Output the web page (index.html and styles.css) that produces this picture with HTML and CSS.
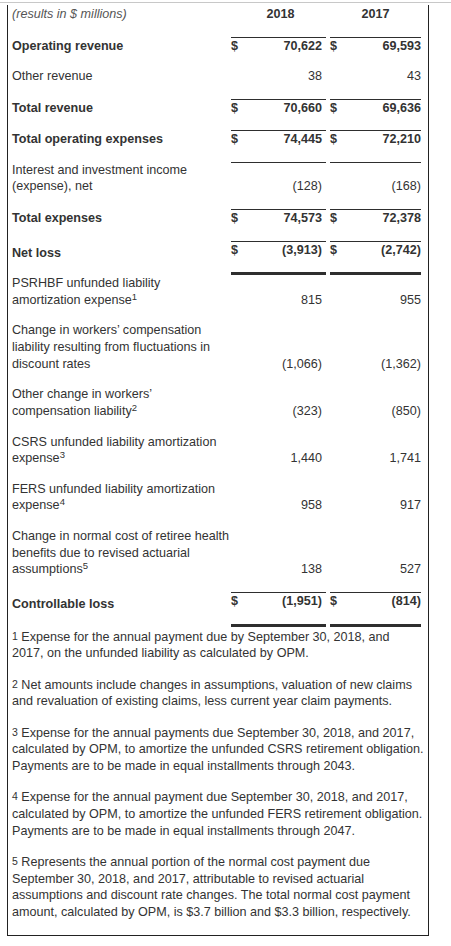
FILE: index.html
```html
<!DOCTYPE html>
<html lang="en">
<head>
  <meta charset="UTF-8">
  <meta name="viewport" content="width=device-width, initial-scale=1.0">
  <title>Controllable loss</title>
  <link rel="stylesheet" href="styles.css">
</head>
<body>
  <div class="topline"></div>

  <div class="panel">
    <table class="stmt">
      <colgroup>
        <col class="c-label">
        <col class="c-cur">
        <col class="c-gap">
        <col class="c-prev">
      </colgroup>

      <!-- cabeçalho -->
      <tr class="head">
        <td class="note">(results in $ millions)</td>
        <td class="year cur">2018</td>
        <td></td>
        <td class="year">2017</td>
      </tr>

      <tr class="bold">
        <td>Operating revenue</td>
        <td class="cur rule"><div class="amt"><span>$</span><span>70,622</span></div></td>
        <td></td>
        <td class="rule"><div class="amt"><span>$</span><span>69,593</span></div></td>
      </tr>
      <tr>
        <td>Other revenue</td>
        <td class="cur"><div class="amt end"><span>38</span></div></td>
        <td></td>
        <td><div class="amt end"><span>43</span></div></td>
      </tr>
      <tr class="bold">
        <td>Total revenue</td>
        <td class="cur rule"><div class="amt"><span>$</span><span>70,660</span></div></td>
        <td></td>
        <td class="rule"><div class="amt"><span>$</span><span>69,636</span></div></td>
      </tr>
      <tr class="bold">
        <td>Total operating expenses</td>
        <td class="cur rule"><div class="amt"><span>$</span><span>74,445</span></div></td>
        <td></td>
        <td class="rule"><div class="amt"><span>$</span><span>72,210</span></div></td>
      </tr>
      <tr>
        <td>Interest and investment income (expense), net</td>
        <td class="cur rule"><div class="amt end"><span>(128)</span></div></td>
        <td></td>
        <td class="rule"><div class="amt end"><span>(168)</span></div></td>
      </tr>
      <tr class="bold">
        <td>Total expenses</td>
        <td class="cur rule"><div class="amt"><span>$</span><span>74,573</span></div></td>
        <td></td>
        <td class="rule"><div class="amt"><span>$</span><span>72,378</span></div></td>
      </tr>
      <tr class="bold">
        <td>Net loss</td>
        <td class="cur rule total"><div class="amt"><span>$</span><span>(3,913)</span></div></td>
        <td></td>
        <td class="rule total"><div class="amt"><span>$</span><span>(2,742)</span></div></td>
      </tr>

      <!-- itens de reconciliação -->
      <tr>
        <td>PSRHBF unfunded liability amortization expense<sup>1</sup></td>
        <td class="cur"><div class="amt end"><span>815</span></div></td>
        <td></td>
        <td><div class="amt end"><span>955</span></div></td>
      </tr>
      <tr>
        <td>Change in workers’ compensation liability resulting from fluctuations in discount rates</td>
        <td class="cur"><div class="amt end"><span>(1,066)</span></div></td>
        <td></td>
        <td><div class="amt end"><span>(1,362)</span></div></td>
      </tr>
      <tr>
        <td>Other change in workers’ compensation liability<sup>2</sup></td>
        <td class="cur"><div class="amt end"><span>(323)</span></div></td>
        <td></td>
        <td><div class="amt end"><span>(850)</span></div></td>
      </tr>
      <tr>
        <td>CSRS unfunded liability amortization expense<sup>3</sup></td>
        <td class="cur"><div class="amt end"><span>1,440</span></div></td>
        <td></td>
        <td><div class="amt end"><span>1,741</span></div></td>
      </tr>
      <tr>
        <td>FERS unfunded liability amortization expense<sup>4</sup></td>
        <td class="cur"><div class="amt end"><span>958</span></div></td>
        <td></td>
        <td><div class="amt end"><span>917</span></div></td>
      </tr>
      <tr>
        <td>Change in normal cost of retiree health benefits due to revised actuarial assumptions<sup>5</sup></td>
        <td class="cur"><div class="amt end"><span>138</span></div></td>
        <td></td>
        <td><div class="amt end"><span>527</span></div></td>
      </tr>
      <tr class="bold">
        <td>Controllable loss</td>
        <td class="cur rule total"><div class="amt"><span>$</span><span>(1,951)</span></div></td>
        <td></td>
        <td class="rule total"><div class="amt"><span>$</span><span>(814)</span></div></td>
      </tr>
    </table>

    <!-- notas de rodapé -->
    <div class="notes">
      <p><sup class="mark">1</sup> Expense for the annual payment due by September 30, 2018, and<br>2017, on the unfunded liability as calculated by OPM.</p>
      <p><sup class="mark">2</sup> Net amounts include changes in assumptions, valuation of new claims and revaluation of existing claims, less current year claim payments.</p>
      <p><sup class="mark">3</sup> Expense for the annual payments due September 30, 2018, and 2017, calculated by OPM, to amortize the unfunded CSRS retirement obligation. Payments are to be made in equal installments through 2043.</p>
      <p><sup class="mark">4</sup> Expense for the annual payment due September 30, 2018, and 2017, calculated by OPM, to amortize the unfunded FERS retirement obligation. Payments are to be made in equal installments through 2047.</p>
      <p><sup class="mark">5</sup> Represents the annual portion of the normal cost payment due September 30, 2018, and 2017, attributable to revised actuarial assumptions and discount rate changes. The total normal cost payment amount, calculated by OPM, is $3.7 billion and $3.3 billion, respectively.</p>
    </div>
  </div>
</body>
</html>
```

FILE: styles.css
```css
/* Variáveis */
:root {
  --text-color: #333333;
  --rule-color: #2e2e2e;
  --pad-bottom: 13.85px;
}

body {
  margin: 0;
  background-color: #ffffff;
  color: var(--text-color);
  font-family: "Liberation Sans", Arial, sans-serif;
  font-size: 12.6px;
  line-height: 16.7px;
}

.topline {
  margin-top: 2px;
  border-top: 1px solid #c8c8c8;
}

.panel {
  width: 416px;
  margin: 2px 0 0 7px;
  padding-left: 4px;
  border: 1px solid #222222;
  border-top: none;
}

.stmt {
  width: 409px;
  table-layout: fixed;
  border-collapse: separate;
  border-spacing: 0;
}

.c-label { width: 219px; }
.c-cur { width: 95px; }
.c-gap { width: 4px; }
.c-prev { width: 91px; }

.stmt td {
  padding: 0 0 var(--pad-bottom);
  vertical-align: bottom;
}

.stmt td.cur {
  padding-right: 4px;
}

.head td {
  padding-top: 1px;
}

.note {
  font-style: italic;
  color: #555555;
}

.year {
  text-align: center;
  font-weight: bold;
}

.head .year.cur {
  padding-left: 4px;
  padding-right: 0;
}

.bold td {
  font-weight: bold;
}

.amt {
  display: flex;
  justify-content: space-between;
}

.amt.end {
  justify-content: flex-end;
}

.rule {
  border-top: 1px solid var(--rule-color);
}

.total {
  border-bottom: 3px solid var(--rule-color);
}

sup {
  font-size: 9.5px;
  line-height: 0;
  vertical-align: 4px;
}

.notes {
  width: 413px;
  padding-top: 2px;
}

.notes p {
  margin: 0;
  padding-bottom: 14.6px;
}

.notes .mark {
  font-size: 10.5px;
  vertical-align: 1px;
}
```
